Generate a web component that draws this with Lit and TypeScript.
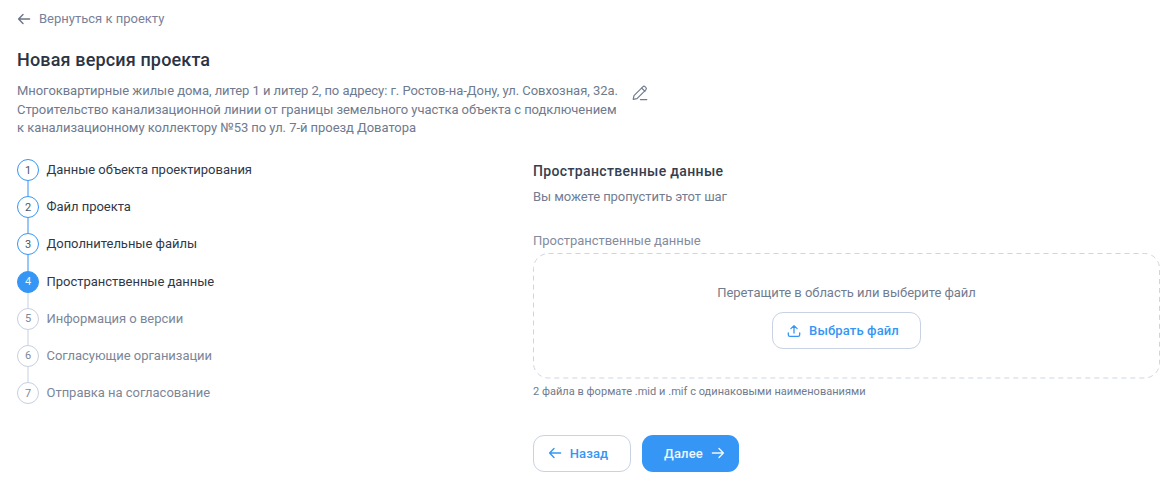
import { LitElement, html, css, svg } from "lit";
import { customElement } from "lit/decorators.js";

const arrowLeft = (c: string) => html`<svg class="ic" viewBox="0 0 14 14" fill="none" stroke=${c} stroke-width="1.4" stroke-linecap="round" stroke-linejoin="round"><path d="M12.6 7H1.6M6 2.4 1.6 7 6 11.6"/></svg>`;
const arrowRight = (c: string) => html`<svg class="ic" viewBox="0 0 14 14" fill="none" stroke=${c} stroke-width="1.4" stroke-linecap="round" stroke-linejoin="round"><path d="M1.4 7h11M8 2.4 12.4 7 8 11.6"/></svg>`;

const steps = [
  "Данные объекта проектирования",
  "Файл проекта",
  "Дополнительные файлы",
  "Пространственные данные",
  "Информация о версии",
  "Согласующие организации",
  "Отправка на согласование",
];

@customElement("app-root")
export class AppRoot extends LitElement {
  static styles = css`
    :host { display: block; width: 1173px; height: 485px; overflow: hidden; background: #fff; font-family: Roboto, "Noto Sans", sans-serif; color: #6b7588; }
    .page { padding: 10px 13px 0 17px; display: flex; flex-direction: column; }
    .back { display: flex; align-items: center; gap: 8px; height: 17px; font-size: 13px; color: #77819a; }
    .ic { width: 14px; height: 14px; flex: none; display: block; }
    h1 { margin: 21px 0 0; font-size: 18px; line-height: 24px; font-weight: 500; letter-spacing: 0.15px; color: #2b3444; }
    .desc-row { display: flex; align-items: flex-start; gap: 8px; margin-top: 10.4px; }
    .desc { width: 606px; font-size: 13px; line-height: 18.5px; letter-spacing: -0.05px; color: #6f7a8e; white-space: nowrap; }
    .edit { width: 18px; height: 18px; margin-top: 2px; flex: none; }
    .main { display: flex; margin-top: 21.15px; }
    .steps { width: 516px; flex: none; display: flex; flex-direction: column; }
    .step { display: flex; gap: 7.5px; height: 37.2px; }
    .mark { width: 22px; display: flex; flex-direction: column; align-items: center; }
    .circle { box-sizing: border-box; width: 22px; height: 22px; flex: none; border-radius: 50%; border: 1px solid #3596f5; display: flex; align-items: center; justify-content: center; font: 400 11px Roboto, sans-serif; color: #4a5568; }
    .line { width: 2px; flex: 1; background: #97c8f9; }
    .label { font: 400 13px/22px Roboto, sans-serif; letter-spacing: -0.03px; color: #2f3848; white-space: nowrap; }
    .current .circle { background: #3596f5; color: #e8f3fe; }
    .future .circle { border-color: #c6cfe0; color: #7c8698; }
    .future .line, .current .line { background: #e2e7f1; }
    .future .label { color: #7c8698; }
    .form { flex: 1; display: flex; flex-direction: column; padding-top: 3px; }
    h2 { margin: 0; font-size: 14px; line-height: 18px; font-weight: 500; letter-spacing: 0.35px; color: #353e4e; }
    .skip { margin-top: 8px; font-size: 13px; line-height: 18px; letter-spacing: -0.07px; color: #737d90; }
    .field { margin-top: 27px; font-size: 13px; line-height: 16px; letter-spacing: -0.03px; color: #838c9e; }
    .drop { position: relative; box-sizing: border-box; margin-top: 4px; height: 125.5px; display: flex; flex-direction: column; align-items: center; padding-top: 31px; }
    .dash { position: absolute; inset: 0; width: 100%; height: 100%; }
    .drop p { margin: 0; font-size: 13px; line-height: 18px; letter-spacing: -0.05px; color: #727c8f; }
    .btn { box-sizing: border-box; display: flex; align-items: center; justify-content: center; border-radius: 11px; font: 500 13px Roboto, sans-serif; letter-spacing: 0.13px; }
    .outline { border: 1px solid #c8d2e4; background: #fff; color: #3596f5; }
    .pick { margin-top: 10px; width: 149px; height: 37px; gap: 8px; padding-right: 7px; }
    .hint { margin-top: 6px; font-size: 11px; line-height: 14px; letter-spacing: 0.03px; color: #6f7a8e; }
    .actions { display: flex; gap: 11px; margin-top: 36.45px; }
    .actions .btn { height: 37px; gap: 8px; }
    .actions .outline { width: 98px; padding-right: 8px; }
    .primary { width: 97px; padding-left: 8px; background: #3596f5; color: #eef6ff; }
  `;

  render() {
    return html`<div class="page">
      <div class="back">${arrowLeft("#6b7588")}<span>Вернуться к проекту</span></div>
      <h1>Новая версия проекта</h1>
      <div class="desc-row">
        <div class="desc">Многоквартирные жилые дома, литер 1 и литер 2, по адресу: г. Ростов-на-Дону, ул. Совхозная, 32а.<br>Строительство канализационной линии от границы земельного участка объекта с подключением<br>к канализационному коллектору №53 по ул. 7-й проезд Доватора</div>
        <svg class="edit" viewBox="0 0 18 18" fill="none" stroke="#727c8f" stroke-width="1.2" stroke-linecap="round" stroke-linejoin="round"><path d="M2.2 15.4 3 11.6 11.8 2.8a1.7 1.7 0 0 1 2.4 0l.6.6a1.7 1.7 0 0 1 0 2.4L6 14.6l-3.8.8ZM10.6 4l3.4 3.4M9.4 15.6h6.4"/></svg>
      </div>
      <div class="main">
        <div class="steps">
          ${steps.map((s, i) => html`<div class="step ${i === 3 ? "current" : i > 3 ? "future" : ""}">
            <div class="mark"><div class="circle">${i + 1}</div>${i < 6 ? html`<div class="line"></div>` : ""}</div>
            <div class="label">${s}</div>
          </div>`)}
        </div>
        <div class="form">
          <h2>Пространственные данные</h2>
          <div class="skip">Вы можете пропустить этот шаг</div>
          <div class="field">Пространственные данные</div>
          <div class="drop">
            <svg class="dash" viewBox="0 0 627 126" preserveAspectRatio="none" fill="none">${svg`<rect x=".5" y=".5" width="626" height="125" rx="15" stroke="#cdd4e2" stroke-dasharray="5 4"/>`}</svg>
            <p>Перетащите в область или выберите файл</p>
            <div class="btn outline pick">
              <svg class="ic" viewBox="0 0 14 14" fill="none" stroke="#3596f5" stroke-width="1.3" stroke-linecap="round" stroke-linejoin="round"><path d="M7 9V1.6M3.9 4.6 7 1.6l3.1 3M1.3 8.8v2a1.6 1.6 0 0 0 1.6 1.6h8.2a1.6 1.6 0 0 0 1.6-1.6v-2"/></svg>
              <span>Выбрать файл</span>
            </div>
          </div>
          <div class="hint">2 файла в формате .mid и .mif с одинаковыми наименованиями</div>
          <div class="actions">
            <div class="btn outline">${arrowLeft("#3596f5")}<span>Назад</span></div>
            <div class="btn primary"><span>Далее</span>${arrowRight("#eef6ff")}</div>
          </div>
        </div>
      </div>
    </div>`;
  }
}
